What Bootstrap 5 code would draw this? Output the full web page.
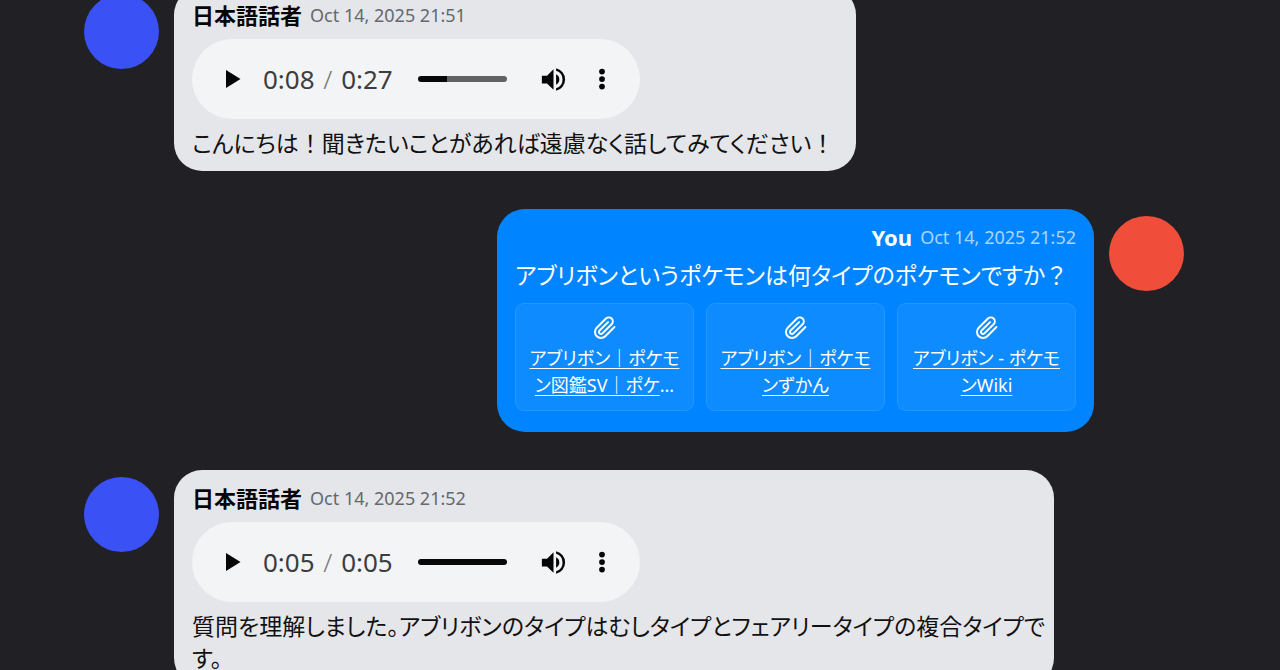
<!DOCTYPE html>
<html lang="ja">
<head>
<meta charset="utf-8">
<meta name="viewport" content="width=device-width, initial-scale=1">
<title>Chat</title>
<link href="https://cdn.jsdelivr.net/npm/bootstrap@5.3.0/dist/css/bootstrap.min.css" rel="stylesheet">
<style>
  body { background: #212025; font-family: "Noto Sans", "Noto Sans CJK JP", sans-serif; font-size: 22px; line-height: 32px; height: 100vh; }
  /* The log is scrolled a little past the top of the first message */
  .chat-log { padding: 0 96px 0 84px; margin-top: -13px; gap: 38px; }
  .msg { gap: 15px; }
  .avatar { width: 75px; height: 75px; margin-top: 7px; background: #3951f5; }
  .avatar-me { background: #f04e3a; }
  .bubble { min-width: 62%; max-width: 80%; padding: 12px 9px 12px 18px; border-radius: 28px; background: #e5e6ea; color: #111; }
  .bubble-me { min-width: 0; background: #0084ff; color: #fff; padding: 12px 18px 21px; }
  .author { font-weight: 700; color: #060608; }
  .bubble-me .author { color: #fff; }
  .stamp { font-size: 18px; color: #66686c; }
  .bubble-me .stamp { color: #a9d6ff; }
  .msg-text { font-size: 23px; }
  .msg-text, .file-card { font-feature-settings: "palt"; word-break: break-all; }
  .full-mark { font-feature-settings: normal; }
  .bubble-me .msg-text { margin-top: 6px; }
  .player { width: 448px; max-width: 100%; height: 80px; margin: 8px 0; padding: 0 22px 0 25px; border-radius: 40px; background: #f3f4f6; }
  .player button { border: 0; background: none; padding: 0; width: 32px; height: 32px; color: #050505; }
  .player svg { display: block; margin: auto; }
  .clock { font-size: 26px; color: #3c3d3f; margin-left: 14px; }
  .slash { margin: 0 2px; font-weight: 300; color: #77787a; }
  .seek { -webkit-appearance: none; appearance: none; width: 89px; height: 6px; border-radius: 3px; margin: 0 31px 0 25px; background: linear-gradient(to right, #080808 var(--played), #626262 var(--played)); }
  .seek::-webkit-slider-thumb { -webkit-appearance: none; width: 1px; height: 6px; opacity: 0; }
  .files { gap: 12px; margin-top: 12px; }
  .file-card { width: 179px; min-height: 108px; padding: 12px 12px 10px; border: 1px solid #2496ff; border-radius: 9px; background: #0d8bff; font-size: 18px; line-height: 27px; text-align: center; }
  .file-card svg { display: block; margin: 0 auto 5px; }
  .file-card a { color: #fff; text-underline-offset: 3px; }
</style>
</head>
<body class="overflow-hidden">
<svg class="d-none" aria-hidden="true">
  <symbol id="i-play" viewBox="0 0 24 24"><path fill="currentColor" d="M5 3v18l14.500-9z"/></symbol>
  <symbol id="i-volume" viewBox="0 0 24 24"><path fill="currentColor" d="M3 9v6h4l5 5V4L7 9H3zm13.500 3A4.500 4.500 0 0 0 14 7.970v8.050A4.470 4.470 0 0 0 16.500 12zM14 3.230v2.060a7 7 0 0 1 0 13.420v2.060a9 9 0 0 0 0-17.540z"/></symbol>
  <symbol id="i-more" viewBox="0 0 24 24"><g fill="currentColor"><circle cx="12" cy="6" r="2.300"/><circle cx="12" cy="12" r="2.300"/><circle cx="12" cy="18" r="2.300"/></g></symbol>
  <symbol id="i-clip" viewBox="0 0 24 24"><path fill="none" stroke="currentColor" stroke-width="2" stroke-linecap="round" stroke-linejoin="round" d="M21.440 11.050l-9.190 9.190a6 6 0 0 1-8.490-8.490l9.190-9.190a4 4 0 0 1 5.660 5.660l-9.200 9.190a2 2 0 0 1-2.830-2.830l8.490-8.480"/></symbol>
</svg>
<main class="chat-log d-flex flex-column">
  <article class="msg d-flex align-items-start">
    <div class="avatar rounded-circle flex-shrink-0"></div>
    <div class="bubble">
      <header class="d-flex align-items-center gap-2"><span class="author">日本語話者</span><time class="stamp">Oct 14, 2025 21:51</time></header>
      <div class="player d-flex align-items-center">
        <button type="button" aria-label="Play"><svg width="24" height="24"><use href="#i-play"/></svg></button>
        <span class="clock text-nowrap">0:08 <span class="slash">/</span> 0:27</span>
        <input class="seek" type="range" min="0" max="27" value="8" aria-label="Position" style="--played:33%">
        <button type="button" aria-label="Mute"><svg width="31" height="31"><use href="#i-volume"/></svg></button>
        <button type="button" class="ms-3" aria-label="More"><svg width="30" height="30"><use href="#i-more"/></svg></button>
      </div>
      <p class="msg-text mb-0">こんにちは<span class="full-mark">！</span>聞きたいことがあれば遠慮なく話してみてください<span class="full-mark">！</span></p>
    </div>
  </article>
  <article class="msg d-flex align-items-start justify-content-end">
    <div class="bubble bubble-me">
      <header class="d-flex align-items-center justify-content-end gap-2"><span class="author">You</span><time class="stamp">Oct 14, 2025 21:52</time></header>
      <p class="msg-text mb-0">アブリボンというポケモンは何タイプのポケモンですか<span class="full-mark">？</span></p>
      <div class="files d-flex">
        <div class="file-card"><svg width="24" height="24"><use href="#i-clip"/></svg><a href="#">アブリボン｜ポケモン図鑑SV｜ポケ</a>...</div>
        <div class="file-card"><svg width="24" height="24"><use href="#i-clip"/></svg><a href="#">アブリボン｜ポケモンずかん</a></div>
        <div class="file-card"><svg width="24" height="24"><use href="#i-clip"/></svg><a href="#">アブリボン - ポケモンWiki</a></div>
      </div>
    </div>
    <div class="avatar avatar-me rounded-circle flex-shrink-0"></div>
  </article>
  <article class="msg d-flex align-items-start">
    <div class="avatar rounded-circle flex-shrink-0"></div>
    <div class="bubble">
      <header class="d-flex align-items-center gap-2"><span class="author">日本語話者</span><time class="stamp">Oct 14, 2025 21:52</time></header>
      <div class="player d-flex align-items-center">
        <button type="button" aria-label="Play"><svg width="24" height="24"><use href="#i-play"/></svg></button>
        <span class="clock text-nowrap">0:05 <span class="slash">/</span> 0:05</span>
        <input class="seek" type="range" min="0" max="5" value="5" aria-label="Position" style="--played:100%">
        <button type="button" aria-label="Mute"><svg width="31" height="31"><use href="#i-volume"/></svg></button>
        <button type="button" class="ms-3" aria-label="More"><svg width="30" height="30"><use href="#i-more"/></svg></button>
      </div>
      <p class="msg-text mb-0">質問を理解しました。アブリボンのタイプはむしタイプとフェアリータイプの複合タイプです。</p>
    </div>
  </article>
</main>
<script src="https://cdn.jsdelivr.net/npm/bootstrap@5.3.0/dist/js/bootstrap.bundle.min.js"></script>
</body>
</html>
